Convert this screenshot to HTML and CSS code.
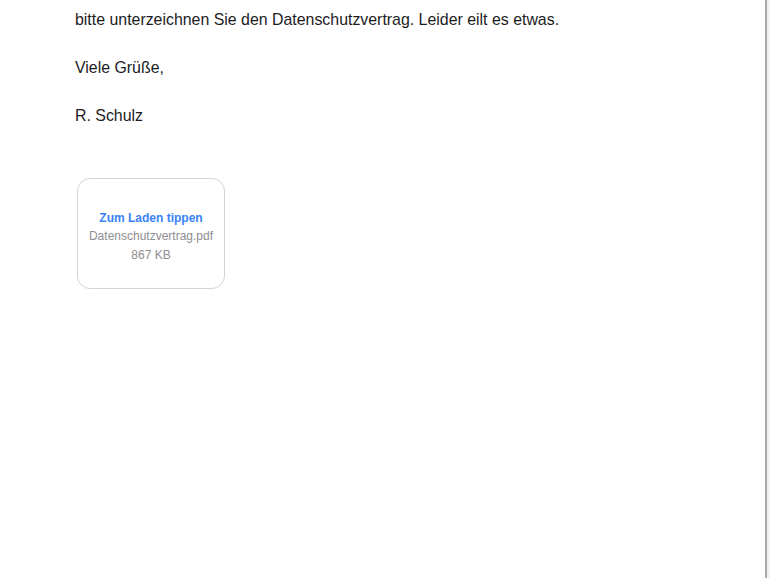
FILE: index.html
```html
<!DOCTYPE html>
<html lang="de">
<head>
<meta charset="utf-8">
<link rel="stylesheet" href="styles.css">
</head>
<body>
<div class="screen">
  <main class="mail">
    <p class="line">bitte unterzeichnen Sie den Datenschutzvertrag. Leider eilt es etwas.</p>
    <p class="line">Viele Grüße,</p>
    <p class="line">R. Schulz</p>
    <div class="attachment">
      <div class="att-action">Zum Laden tippen</div>
      <div class="att-name">Datenschutzvertrag.pdf</div>
      <div class="att-size">867 KB</div>
    </div>
  </main>
  <div class="divider"></div>
  <div class="edge"></div>
</div>
</body>
</html>
```
FILE: styles.css
```css
html, body {
  margin: 0;
  padding: 0;
  background: #ffffff;
}
.screen {
  display: flex;
  width: 770px;
  height: 578px;
  overflow: hidden;
}
.mail {
  flex: 1;
  padding: 8px 0 0 75px;
  font-family: "Liberation Sans", Arial, sans-serif;
  color: #1c1c1e;
}
.line {
  margin: 0 0 24px 0;
  font-size: 15.9px;
  line-height: 24px;
}
.attachment {
  margin-top: 50px;
  margin-left: 2px;
  width: 146px;
  height: 103px;
  border: 1px solid #d4d4d6;
  border-radius: 13px;
  display: flex;
  flex-direction: column;
  align-items: center;
  justify-content: center;
  font-size: 12px;
  line-height: 18.5px;
  padding-top: 6px;
  box-sizing: content-box;
}
.att-action {
  color: #3a82f7;
  font-weight: bold;
  font-size: 12px;
}
.att-name, .att-size {
  color: #8e8e93;
}
.divider {
  width: 2px;
  background: #a9a9a9;
}
.edge {
  width: 3px;
  background: #f2f2f2;
}
```
